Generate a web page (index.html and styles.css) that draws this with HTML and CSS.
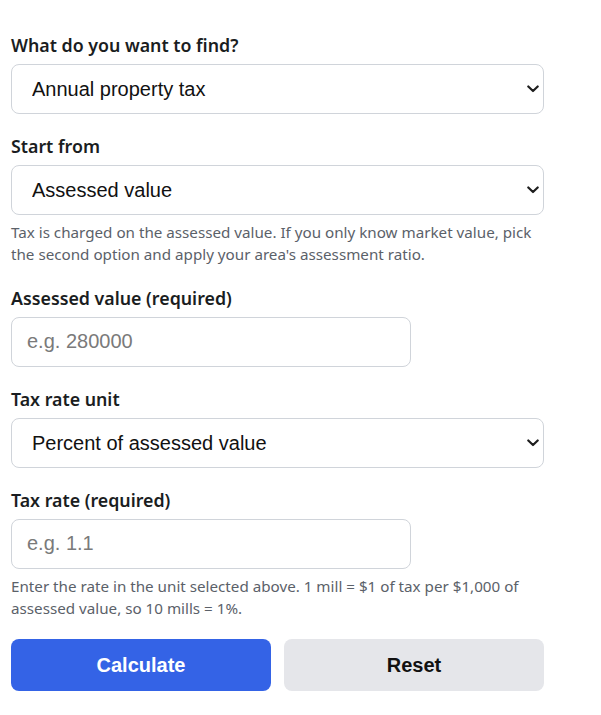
FILE: index.html
```html
<!DOCTYPE html>
<html lang="en">
<head>
<meta charset="utf-8">
<title>Property tax calculator</title>
<link rel="stylesheet" href="styles.css">
</head>
<body>
<form class="calc">
  <div class="field">
    <label class="label" for="find">What do you want to find?</label>
    <div class="select-wrap">
      <select id="find" class="control select">
        <option>Annual property tax</option>
      </select>
      <svg class="chevron" width="12" height="8" viewBox="0 0 12 8" aria-hidden="true"><path d="M1.3 1.5 L6 6 L10.7 1.5" fill="none" stroke="#1e1e1e" stroke-width="2.2" stroke-linecap="round" stroke-linejoin="round"/></svg>
    </div>
  </div>
  <div class="field">
    <label class="label" for="start">Start from</label>
    <div class="select-wrap">
      <select id="start" class="control select">
        <option>Assessed value</option>
      </select>
      <svg class="chevron" width="12" height="8" viewBox="0 0 12 8" aria-hidden="true"><path d="M1.3 1.5 L6 6 L10.7 1.5" fill="none" stroke="#1e1e1e" stroke-width="2.2" stroke-linecap="round" stroke-linejoin="round"/></svg>
    </div>
    <p class="help">Tax is charged on the assessed value. If you only know market value, pick the second option and apply your area's assessment ratio.</p>
  </div>
  <div class="field">
    <label class="label" for="assessed">Assessed value (required)</label>
    <input id="assessed" class="control input" type="text" placeholder="e.g. 280000">
  </div>
  <div class="field">
    <label class="label" for="unit">Tax rate unit</label>
    <div class="select-wrap">
      <select id="unit" class="control select">
        <option>Percent of assessed value</option>
      </select>
      <svg class="chevron" width="12" height="8" viewBox="0 0 12 8" aria-hidden="true"><path d="M1.3 1.5 L6 6 L10.7 1.5" fill="none" stroke="#1e1e1e" stroke-width="2.2" stroke-linecap="round" stroke-linejoin="round"/></svg>
    </div>
  </div>
  <div class="field">
    <label class="label" for="rate">Tax rate (required)</label>
    <input id="rate" class="control input" type="text" placeholder="e.g. 1.1">
    <p class="help">Enter the rate in the unit selected above. 1 mill = $1 of tax per $1,000 of assessed value, so 10 mills = 1%.</p>
  </div>
  <div class="actions">
    <button type="button" class="btn btn-primary">Calculate</button>
    <button type="reset" class="btn btn-secondary">Reset</button>
  </div>
</form>
</body>
</html>
```
FILE: styles.css
```css
html, body {
  margin: 0;
  padding: 0;
  background: #ffffff;
}
body {
  font-family: "Noto Sans", "Open Sans", sans-serif;
  color: #1f2328;
}
.calc {
  width: 533px;
  padding: 33px 11px;
  display: flex;
  flex-direction: column;
  gap: 20px;
}
.field {
  display: flex;
  flex-direction: column;
}
.label {
  font-size: 17.8px;
  font-weight: 600;
  line-height: 24px;
  margin-bottom: 7px;
  color: #1a1d21;
}
.control {
  box-sizing: border-box;
  height: 50px;
  border: 1px solid #d0d4da;
  border-radius: 8px;
  background: #ffffff;
  font-family: "Liberation Sans", Arial, sans-serif;
  font-size: 20px;
  color: #111111;
  margin: 0;
}
.select-wrap {
  position: relative;
  width: 533px;
}
.select {
  -webkit-appearance: none;
  appearance: none;
  width: 533px;
  padding: 0 30px 0 20px;
  display: block;
}
.chevron {
  position: absolute;
  right: 5px;
  top: 21px;
  pointer-events: none;
}
.input {
  width: 400px;
  padding: 0 15px;
  outline: none;
}
.input::placeholder {
  color: #7a7a7a;
}
.help {
  margin: 6px 0 0;
  font-size: 15.2px;
  line-height: 22.25px;
  color: #5b6169;
}
.actions {
  display: grid;
  grid-template-columns: 1fr 1fr;
  gap: 13px;
  margin-top: 0;
}
.btn {
  height: 52px;
  border: none;
  border-radius: 8px;
  font-family: "Liberation Sans", Arial, sans-serif;
  font-size: 20px;
  font-weight: 700;
  cursor: pointer;
}
.btn-primary {
  background: #3463e6;
  color: #ffffff;
}
.btn-secondary {
  background: #e5e6ea;
  color: #111111;
}
```
